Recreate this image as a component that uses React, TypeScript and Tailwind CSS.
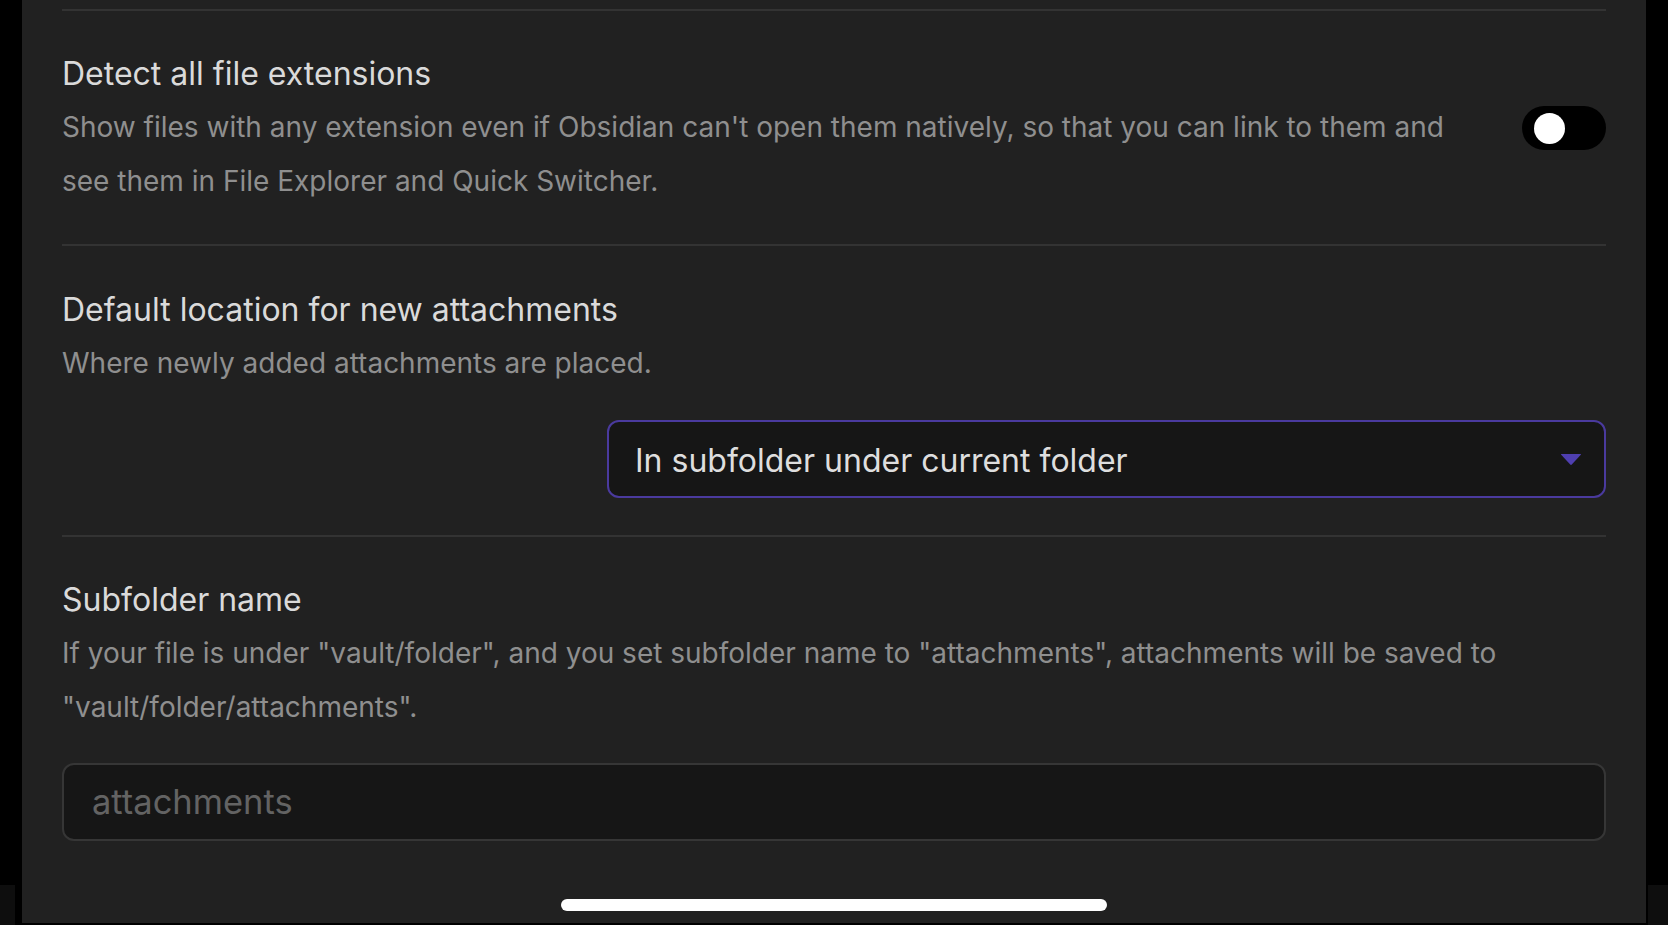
import React from "react";

const Toggle = () => (
    <div className="w-[84px] h-[44px] rounded-full bg-black flex items-center pl-[12px] shrink-0 mb-[6px]">
        <div className="w-[31px] h-[31px] rounded-full bg-white" />
    </div>
);

const SettingInfo = ({ title, desc, gap }: { title: string; desc: string; gap: string }) => (
    <div className="flex flex-col">
        <div className="text-[32px] leading-[40px] text-[#dadada]">{title}</div>
        <div className={`${gap} text-[28px] leading-[54px] text-[#8f8f8f]`}>{desc}</div>
    </div>
);

export default function App() {
    return (
        <div
            className="w-[1668px] h-[925px] bg-black flex overflow-hidden"
            style={{ fontFamily: "Inter, 'Noto Sans', sans-serif" }}
        >
            {/* left edge */}
            <div className="w-[22px] h-full flex flex-col">
                <div className="flex-1" />
                <div className="h-[40px] w-[15px] bg-[#0e0e0e]" />
            </div>

            <div className="w-[1624px] h-[923px] bg-[#212121] px-[40px] pt-[9px] flex flex-col">
                {/* Detect all file extensions */}
                <div className="border-t-2 border-[#333333] pt-[43px] pb-[36px] flex items-center">
                    <div className="flex-1 pr-[60px]">
                        <SettingInfo
                            title="Detect all file extensions"
                            desc="Show files with any extension even if Obsidian can't open them natively, so that you can link to them and see them in File Explorer and Quick Switcher."
                            gap="mt-[6px]"
                        />
                    </div>
                    <Toggle />
                </div>

                {/* Default location */}
                <div className="border-t-2 border-[#333333] pt-[44px] pb-[37px] flex flex-col">
                    <SettingInfo
                        title="Default location for new attachments"
                        desc="Where newly added attachments are placed."
                        gap="mt-[6px]"
                    />
                    <div className="mt-[30px] self-end w-[999px] h-[78px] border-2 border-[#4a3a9e] rounded-[12px] bg-[#161616] flex items-center justify-between pl-[26px] pr-[22px]">
                        <span className="text-[32px] pt-[4px] text-[#dedede]">In subfolder under current folder</span>
                        <svg width="22" height="13" viewBox="0 0 22 13">
                            <path d="M1.5 1 L20.5 1 Q21.5 1 20.8 1.8 L11.8 11.6 Q11 12.4 10.2 11.6 L1.2 1.8 Q0.5 1 1.5 1 Z" fill="#4f3fb0" />
                        </svg>
                    </div>
                </div>

                {/* Subfolder name */}
                <div className="border-t-2 border-[#333333] pt-[43px] flex flex-col">
                    <SettingInfo
                        title="Subfolder name"
                        desc={'If your file is under "vault/folder", and you set subfolder name to "attachments", attachments will be saved to "vault/folder/attachments".'}
                        gap="mt-[6px]"
                    />
                    <div className="mt-[29px] w-full h-[78px] border-2 border-[#363636] rounded-[12px] bg-[#161616] flex items-center pl-[28px]">
                        <span className="text-[34.5px] text-[#636363]">attachments</span>
                    </div>
                </div>

                <div className="mt-auto mb-[12px] self-center w-[546px] h-[12px] rounded-full bg-white" />
            </div>

            {/* right edge */}
            <div className="flex-1 h-full flex flex-col items-end">
                <div className="flex-1" />
                <div className="h-[40px] w-[20px] bg-[#0e0e0e]" />
            </div>
        </div>
    );
}
